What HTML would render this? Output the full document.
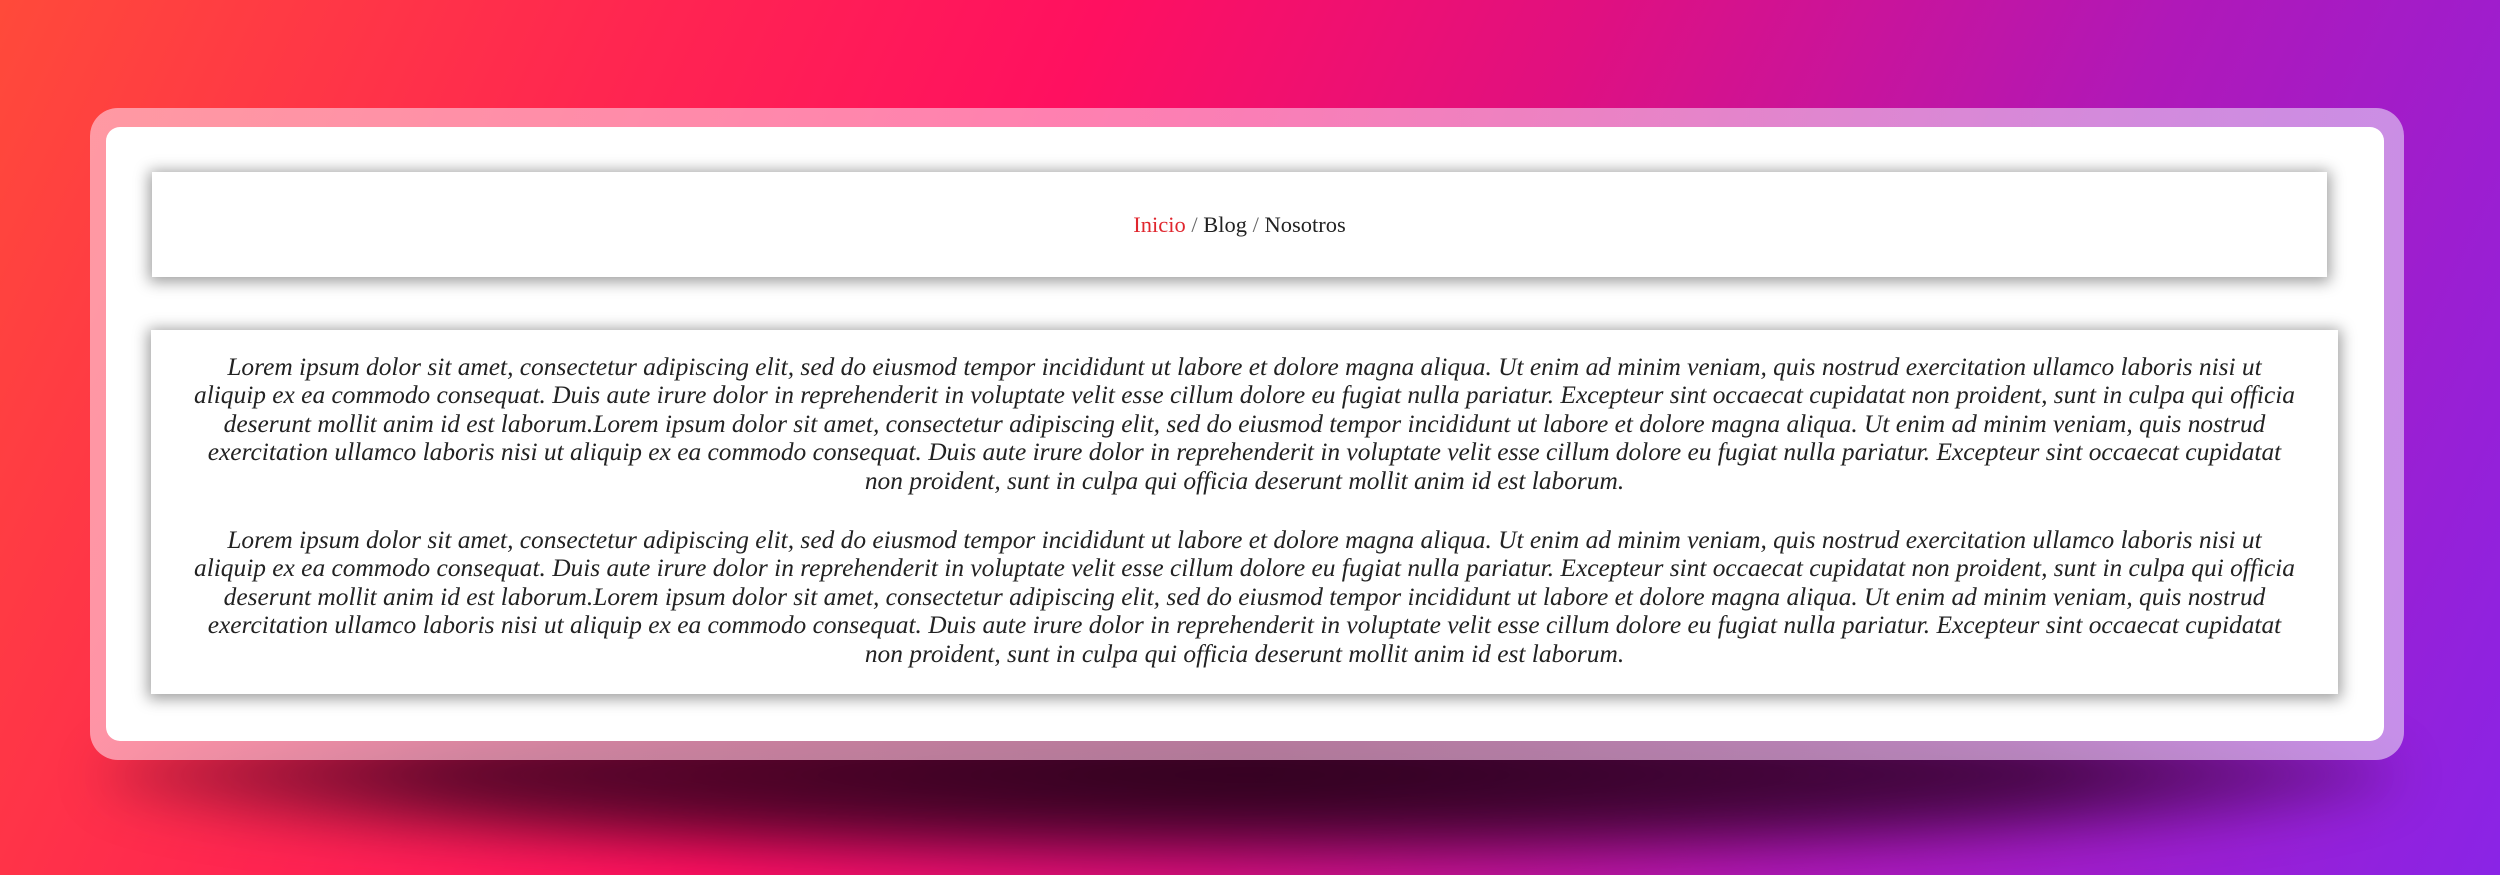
<!DOCTYPE html>
<html><head><meta charset="utf-8"><style>
html,body{margin:0;padding:0}
body{width:2500px;height:875px;overflow:hidden;position:relative;
background:linear-gradient(115deg,#ff4a3a 0%,#ff2650 22%,#ff1060 38%,#e01080 55%,#b018b8 75%,#8a24e6 100%);
font-family:"Liberation Serif",serif}
.shadow{position:absolute;left:100px;top:690px;width:2300px;height:170px;border-radius:50%;
background:radial-gradient(ellipse at center,rgba(30,0,20,0.95) 0%,rgba(40,0,30,0.75) 50%,rgba(40,0,40,0) 78%);filter:blur(25px)}
.outer{position:absolute;left:90px;top:108px;width:2314px;height:652px;border-radius:28px;
background:linear-gradient(90deg,rgba(255,190,205,0.7),rgba(255,200,230,0.6) 50%,rgba(220,190,240,0.7))}
.inner{position:absolute;left:106px;top:127px;width:2278px;height:614px;border-radius:14px;background:#fff}
.card{position:absolute;background:#fff;box-shadow:0 2px 14px 3px rgba(0,0,0,0.38)}
.nav{left:152px;top:172px;width:2175px;height:105px;display:flex;align-items:center;justify-content:center;font-size:22.5px;color:#222}
.nav .a{color:#e0262e}.nav .s{color:#666}
.content{left:151px;top:330px;width:2187px;height:364px;box-sizing:border-box;padding:23px 40px 0;text-align:center;font-style:italic;font-size:25.4px;line-height:28.4px;color:#222}
.content p{margin:0 0 31px}
</style></head><body>
<div class="shadow"></div>
<div class="outer"></div>
<div class="inner"></div>
<div class="card nav"><span><span class="a">Inicio</span> <span class="s">/</span> Blog <span class="s">/</span> Nosotros</span></div>
<div class="card content">
<p>Lorem ipsum dolor sit amet, consectetur adipiscing elit, sed do eiusmod tempor incididunt ut labore et dolore magna aliqua. Ut enim ad minim veniam, quis nostrud exercitation ullamco laboris nisi ut aliquip ex ea commodo consequat. Duis aute irure dolor in reprehenderit in voluptate velit esse cillum dolore eu fugiat nulla pariatur. Excepteur sint occaecat cupidatat non proident, sunt in culpa qui officia deserunt mollit anim id est laborum.Lorem ipsum dolor sit amet, consectetur adipiscing elit, sed do eiusmod tempor incididunt ut labore et dolore magna aliqua. Ut enim ad minim veniam, quis nostrud exercitation ullamco laboris nisi ut aliquip ex ea commodo consequat. Duis aute irure dolor in reprehenderit in voluptate velit esse cillum dolore eu fugiat nulla pariatur. Excepteur sint occaecat cupidatat non proident, sunt in culpa qui officia deserunt mollit anim id est laborum.</p>
<p>Lorem ipsum dolor sit amet, consectetur adipiscing elit, sed do eiusmod tempor incididunt ut labore et dolore magna aliqua. Ut enim ad minim veniam, quis nostrud exercitation ullamco laboris nisi ut aliquip ex ea commodo consequat. Duis aute irure dolor in reprehenderit in voluptate velit esse cillum dolore eu fugiat nulla pariatur. Excepteur sint occaecat cupidatat non proident, sunt in culpa qui officia deserunt mollit anim id est laborum.Lorem ipsum dolor sit amet, consectetur adipiscing elit, sed do eiusmod tempor incididunt ut labore et dolore magna aliqua. Ut enim ad minim veniam, quis nostrud exercitation ullamco laboris nisi ut aliquip ex ea commodo consequat. Duis aute irure dolor in reprehenderit in voluptate velit esse cillum dolore eu fugiat nulla pariatur. Excepteur sint occaecat cupidatat non proident, sunt in culpa qui officia deserunt mollit anim id est laborum.</p>
</div>
</body></html>
